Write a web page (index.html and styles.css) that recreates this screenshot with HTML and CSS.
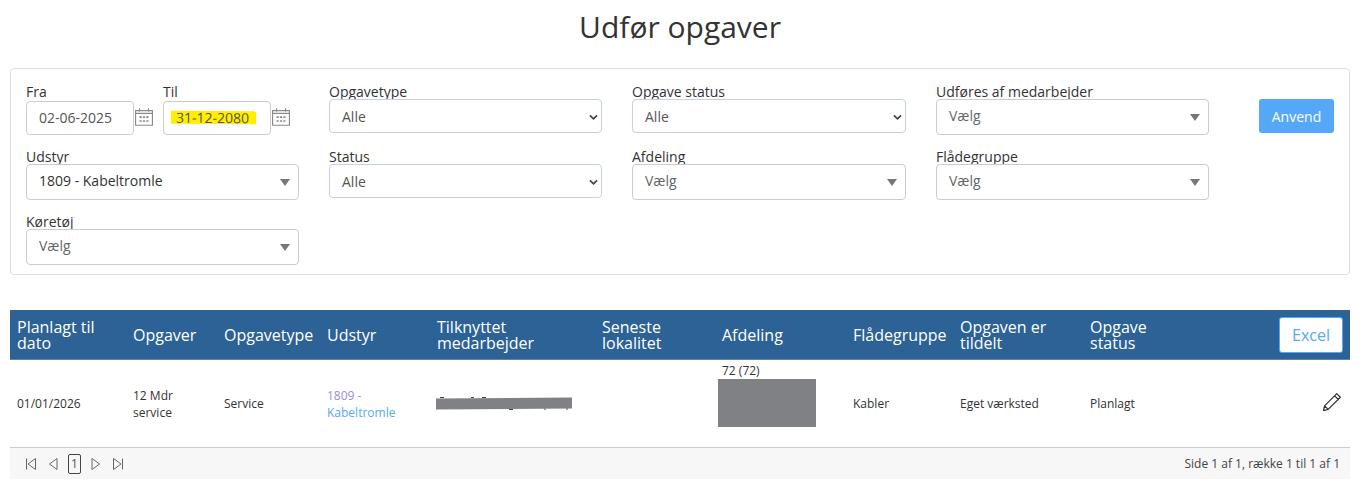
FILE: index.html
```html
<!DOCTYPE html>
<html lang="da">
<head>
<meta charset="utf-8">
<title>Udfør opgaver</title>
<link rel="stylesheet" href="styles.css">
</head>
<body>
<h1 class="title">Udfør opgaver</h1>
<section class="filters">
  <div class="field dates">
    <div class="date">
      <label>Fra</label>
      <div class="date-row">
        <div class="date-input">02-06-2025</div>
        <svg class="cal" viewBox="1 1.200 16 16"><path d="M1.500 3.500h15v13h-15zM1.500 6h15M5 1.500v3M13 1.500v3" fill="none" stroke="#8a8a8a"/><path d="M5 8.500h2v1.500H5zM8 8.500h2v1.500H8zM11 8.500h2v1.500h-2zM5 12h2v1.500H5zM8 12h2v1.500H8zM11 12h2v1.500h-2z" fill="#8a8a8a"/></svg>
      </div>
    </div>
    <div class="date">
      <label>Til</label>
      <div class="date-row">
        <div class="date-input"><span class="marked">31-12-2080</span></div>
        <svg class="cal" viewBox="1 1.200 16 16"><path d="M1.500 3.500h15v13h-15zM1.500 6h15M5 1.500v3M13 1.500v3" fill="none" stroke="#8a8a8a"/><path d="M5 8.500h2v1.500H5zM8 8.500h2v1.500H8zM11 8.500h2v1.500h-2zM5 12h2v1.500H5zM8 12h2v1.500H8zM11 12h2v1.500h-2z" fill="#8a8a8a"/></svg>
      </div>
    </div>
  </div>
  <div class="field"><label>Opgavetype</label><div class="native">Alle<svg class="chev" viewBox="0 0 10 8"><path d="M1 1.500l4 4 4-4" fill="none" stroke="#444" stroke-width="2"/></svg></div></div>
  <div class="field"><label>Opgave status</label><div class="native">Alle<svg class="chev" viewBox="0 0 10 8"><path d="M1 1.500l4 4 4-4" fill="none" stroke="#444" stroke-width="2"/></svg></div></div>
  <div class="field"><label>Udføres af medarbejder</label><div class="combo muted">Vælg<i class="caret"></i></div></div>
  <button class="apply">Anvend</button>
  <div class="field"><label>Udstyr</label><div class="combo">1809 - Kabeltromle<i class="caret"></i></div></div>
  <div class="field"><label>Status</label><div class="native">Alle<svg class="chev" viewBox="0 0 10 8"><path d="M1 1.500l4 4 4-4" fill="none" stroke="#444" stroke-width="2"/></svg></div></div>
  <div class="field"><label>Afdeling</label><div class="combo muted">Vælg<i class="caret"></i></div></div>
  <div class="field"><label>Flådegruppe</label><div class="combo muted">Vælg<i class="caret"></i></div></div>
  <div class="spacer"></div>
  <div class="field"><label>Køretøj</label><div class="combo muted">Vælg<i class="caret"></i></div></div>
</section>
<section class="grid">
  <table>
    <colgroup>
      <col class="c1"><col class="c2"><col class="c3"><col class="c4"><col class="c5"><col class="c6"><col class="c7"><col class="c8"><col class="c9"><col class="c10"><col>
    </colgroup>
    <thead>
      <tr>
        <th>Planlagt til dato</th><th>Opgaver</th><th>Opgavetype</th><th>Udstyr</th><th>Tilknyttet medarbejder</th><th>Seneste lokalitet</th><th>Afdeling</th><th>Flådegruppe</th><th>Opgaven er tildelt</th><th>Opgave status</th>
        <th class="action"><button class="excel">Excel</button></th>
      </tr>
    </thead>
    <tbody>
      <tr>
        <td>01/01/2026</td>
        <td class="two-line">12 Mdr service</td>
        <td>Service</td>
        <td class="two-line"><span class="visited">1809 -</span> <span class="link">Kabeltromle</span></td>
        <td class="redact-cell">
          <svg class="peek" viewBox="0 0 140 16"><path d="M4 2.500h4M35 2.500h3M46 2.500h4M73 14.500h4M108 14h2M130 14h2" fill="none" stroke="#444"/></svg>
          <i class="redact-line"></i>
        </td>
        <td></td>
        <td class="dept"><span class="dept-no">72 (72)</span><i class="redact-block"></i></td>
        <td>Kabler</td>
        <td>Eget værksted</td>
        <td>Planlagt</td>
        <td class="action"><svg class="pencil" viewBox="2 2 16 16"><path d="M14.200 2.600l3.200 3.200L6.600 16.600 2.400 17.600l1-4.200zM12.300 4.500l3.200 3.200M3.400 13.400l3.200 3.200" fill="none" stroke="#333" stroke-width="1.100" stroke-linejoin="round"/></svg></td>
      </tr>
    </tbody>
  </table>
  <footer class="pager">
    <div class="pager-nav">
      <svg class="pg" viewBox="0 0 12 14"><path d="M1.500 1.500v11M10.500 1.500L3 7l7.500 5.500z" fill="none" stroke="#666"/></svg>
      <svg class="pg" viewBox="0 0 12 14"><path d="M10 1.500L2.500 7l7.500 5.500z" fill="none" stroke="#666"/></svg>
      <span class="page-no">1</span>
      <svg class="pg" viewBox="0 0 12 14"><path d="M2 1.500L9.500 7 2 12.500z" fill="none" stroke="#666"/></svg>
      <svg class="pg" viewBox="0 0 12 14"><path d="M10.500 1.500v11M1.500 1.500L9 7l-7.500 5.500z" fill="none" stroke="#666"/></svg>
    </div>
    <div class="pager-info">Side 1 af 1, række 1 til 1 af 1</div>
  </footer>
</section>
</body>
</html>
```
FILE: styles.css
```css
* { box-sizing: border-box; }
html, body { margin: 0; padding: 0; }
body { width: 1363px; height: 504px; background: #fff; font-family: "Open Sans", sans-serif; color: #333; overflow: hidden; }
.title { margin: 0 13px 0 10px; height: 68px; padding-top: 5px; font-size: 30px; line-height: 44px; font-weight: 400; text-align: center; color: #333; }
.filters { margin: 0 13px 0 10px; height: 207px; border: 1px solid #ddd; border-radius: 4px; padding: 15px 0 0 15px; display: grid; grid-template-columns: 273px 273px 274px 273px 75px; column-gap: 30px; grid-template-rows: 50px 50px 50px; row-gap: 15px; }
.field { position: relative; min-width: 0; }
label { display: block; font-size: 14px; line-height: 16px; color: #333; }
.native, .combo { position: relative; font-size: 14px; color: #333; background: #fff; border-radius: 4px; padding-left: 12px; }
.native { height: 34px; line-height: 33px; border: 1px solid #c5d0e0; color: #555; margin-top: -1px; }
.combo { height: 36px; line-height: 31px; border: 1px solid #ccc; margin-top: -1px; }
.muted { color: #666; }
.caret { position: absolute; right: 8px; top: 14px; width: 0; height: 0; border-left: 5px solid transparent; border-right: 5px solid transparent; border-top: 7px solid #777; }
.chev { position: absolute; right: 3px; top: 14px; width: 9px; height: 7px; }
.dates { display: flex; gap: 29px; }
.date { width: 108px; }
.date-row { position: relative; margin-top: 1px; }
.date-input { width: 108px; height: 34px; border: 1px solid #ccc; border-radius: 4px; padding-left: 12px; font-size: 14px; line-height: 32px; color: #555; }
.marked { background: #ffee00; color: #555; display: inline-block; line-height: 13px; padding: 0 7px 0 5px; margin-left: -5px; transform: rotate(.5deg); }
.cal { position: absolute; left: 109px; top: 7px; width: 18px; height: 18px; }
.apply { align-self: start; width: 75px; height: 34px; margin: 15px 0 0 20px; border: 0; border-radius: 3px; background: #54a8f7; color: #fff; font: 14px "Open Sans", sans-serif; padding: 0; }
.grid { margin: 35px 13px 0 10px; }
table { width: 1340px; table-layout: fixed; border-collapse: separate; border-spacing: 0; }
.c1 { width: 116px; } .c2 { width: 91px; } .c3 { width: 103px; } .c4 { width: 110px; } .c5 { width: 165px; }
.c6 { width: 120px; } .c7 { width: 131px; } .c8 { width: 107px; } .c9 { width: 130px; } .c10 { width: 120px; }
thead tr { height: 50px; }
th { height: 50px; padding: 0 7px; background: #2c6295; border-bottom: 1px solid #5f84a8; font-size: 16px; line-height: 16px; font-weight: 400; color: #fff; text-align: left; }
tbody tr { height: 87px; }
td { height: 87px; padding: 0 7px; font-size: 12px; line-height: 16px; color: #333; vertical-align: middle; }
td.two-line { padding-top: 1px; line-height: 17px; }
th.action, td.action { text-align: right; padding-right: 7px; }
.excel { width: 64px; height: 36px; background: #fff; border: 1px solid #54a8f7; border-radius: 3px; color: #54a8f7; font: 16px "Open Sans", sans-serif; padding: 0; vertical-align: middle; }
.visited { color: #9a8fe0; }
.link { color: #54a8f7; }
.redact-cell, .dept { position: relative; }
.peek { position: absolute; left: 6px; top: 35px; width: 140px; height: 16px; }
.redact-line { position: absolute; left: 6px; top: 38px; width: 136px; height: 11px; background: #808184; transform: rotate(-.4deg); }
.dept-no { position: absolute; left: 7px; top: 3px; }
.redact-block { position: absolute; left: 3px; top: 19px; width: 98px; height: 48px; background: #808184; }
.pencil { display: block; width: 18px; height: 18px; margin: -3px 2px 0 auto; }
.pager { height: 32px; border-top: 1px solid #ccc; background: #f7f7f7; display: flex; justify-content: space-between; align-items: center; padding: 0 10px 0 15px; font-size: 12px; color: #444; }
.pager-nav { display: flex; align-items: center; gap: 10px; }
.pg { width: 12px; height: 14px; }
.page-no { width: 13px; height: 20px; margin: 0 -1px; border: 1px solid #444; border-radius: 2px; text-align: center; line-height: 18px; color: #555; }
```
